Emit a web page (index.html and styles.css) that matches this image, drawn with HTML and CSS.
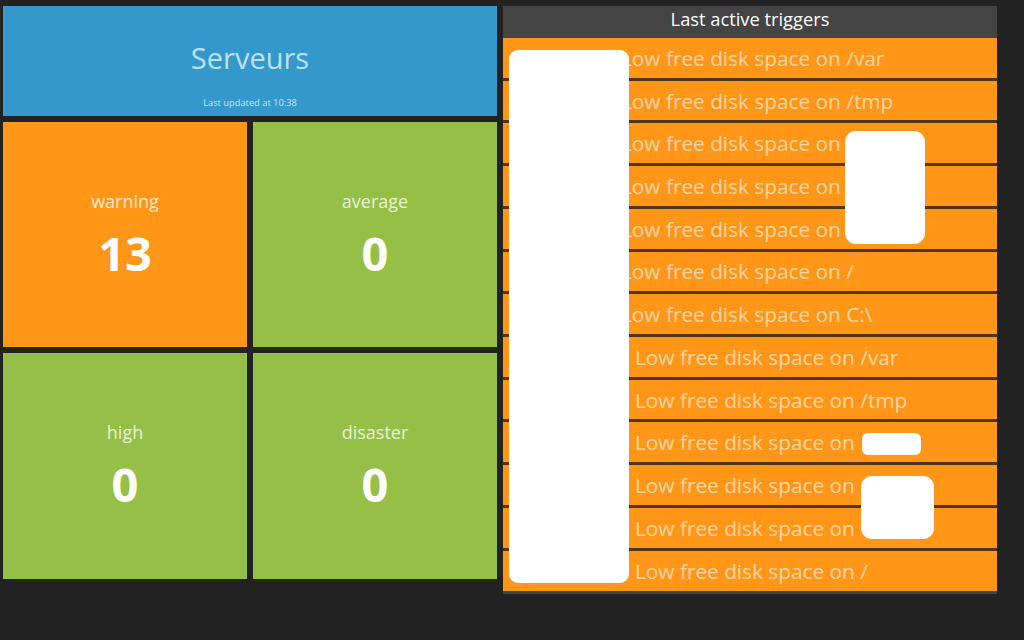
FILE: index.html
```html
<!DOCTYPE html>
<html lang="fr">
<head>
<meta charset="utf-8">
<title>Serveurs</title>
<link rel="stylesheet" href="styles.css">
</head>
<body>
<div class="board">
  <div class="left">
    <div class="tile tile-title">
      <h1 class="title">Serveurs</h1>
      <p class="updated">Last updated at 10:38</p>
    </div>
    <div class="tile tile-orange">
      <h2 class="label">warning</h2>
      <p class="value">13</p>
    </div>
    <div class="tile tile-green">
      <h2 class="label">average</h2>
      <p class="value">0</p>
    </div>
    <div class="tile tile-green">
      <h2 class="label">high</h2>
      <p class="value">0</p>
    </div>
    <div class="tile tile-green">
      <h2 class="label">disaster</h2>
      <p class="value">0</p>
    </div>
  </div>
  <div class="triggers">
    <h2 class="triggers-head">Last active triggers</h2>
    <ul class="list">
      <li class="row"><span class="host host-long"></span>Low free disk space on /var</li>
      <li class="row"><span class="host host-long"></span>Low free disk space on /tmp</li>
      <li class="row"><span class="host host-long"></span>Low free disk space on</li>
      <li class="row"><span class="host host-long"></span>Low free disk space on</li>
      <li class="row"><span class="host host-long"></span>Low free disk space on</li>
      <li class="row"><span class="host host-long"></span>Low free disk space on /</li>
      <li class="row"><span class="host host-long"></span>Low free disk space on C:\</li>
      <li class="row"><span class="host"></span>Low free disk space on /var</li>
      <li class="row"><span class="host"></span>Low free disk space on /tmp</li>
      <li class="row"><span class="host"></span>Low free disk space on</li>
      <li class="row"><span class="host"></span>Low free disk space on</li>
      <li class="row"><span class="host"></span>Low free disk space on</li>
      <li class="row"><span class="host"></span>Low free disk space on /</li>
    </ul>
    <div class="redact redact-hosts"></div>
    <div class="redact redact-a"></div>
    <div class="redact redact-b"></div>
    <div class="redact redact-c"></div>
  </div>
</div>
</body>
</html>
```

FILE: styles.css
```css
html, body {
  margin: 0;
  padding: 0;
  background: #222222;
  font-family: "Open Sans", "Noto Sans", sans-serif;
}

.board {
  display: flex;
  gap: 6px;
  padding: 6px 3px;
  width: 994px;
}

.left {
  display: grid;
  grid-template-columns: 244px 244px;
  grid-template-rows: 110px 225px 226px;
  gap: 6px;
  width: 494px;
  flex: none;
}

.tile {
  display: flex;
  flex-direction: column;
  align-items: center;
  justify-content: center;
  color: #ffffff;
}

.tile-title {
  grid-column: 1 / span 2;
  background: #3399cc;
  position: relative;
}

.title {
  margin: 0 0 8px;
  font-size: 29px;
  font-weight: 400;
  color: rgba(255, 255, 255, 0.7);
  line-height: 1;
}

.updated {
  position: absolute;
  bottom: 7px;
  left: 0;
  right: 0;
  margin: 0;
  text-align: center;
  font-size: 9.3px;
  color: rgba(255, 255, 255, 0.75);
}

.tile-orange {
  background: #ff9618;
}

.tile-green {
  background: #96bf48;
}

.label {
  margin: 0 0 12px;
  font-size: 18px;
  font-weight: 400;
  line-height: 24px;
  color: rgba(255, 255, 255, 0.8);
}

.value {
  margin: 0;
  font-size: 47px;
  font-weight: 700;
  line-height: 56px;
  color: #ffffff;
}

.triggers {
  position: relative;
  width: 494px;
  flex: none;
  align-self: flex-start;
  background: #444444;
}

.triggers-head {
  margin: 0;
  height: 32px;
  line-height: 26px;
  text-align: center;
  font-size: 18.3px;
  font-weight: 400;
  color: #ffffff;
}

.list {
  list-style: none;
  margin: 0;
  padding: 0 0 3px;
}

.row {
  display: flex;
  align-items: center;
  height: 39.72px;
  border-bottom: 3px solid #4f3616;
  background: #ff9618;
  font-size: 20.8px;
  color: rgba(255, 255, 255, 0.62);
  white-space: nowrap;
}

.row:last-child {
  border-bottom: none;
  height: 40px;
}

.host {
  flex: none;
  width: 132px;
}

.host-long {
  width: 118px;
}

.redact {
  position: absolute;
  background: #ffffff;
}

.redact-hosts {
  left: 6px;
  top: 44px;
  width: 120px;
  height: 533px;
  border-radius: 9px;
}

.redact-a {
  left: 342px;
  top: 125px;
  width: 80px;
  height: 113px;
  border-radius: 11px;
}

.redact-b {
  left: 359px;
  top: 427px;
  width: 59px;
  height: 22px;
  border-radius: 6px;
}

.redact-c {
  left: 358px;
  top: 470px;
  width: 73px;
  height: 63px;
  border-radius: 11px;
}
```
